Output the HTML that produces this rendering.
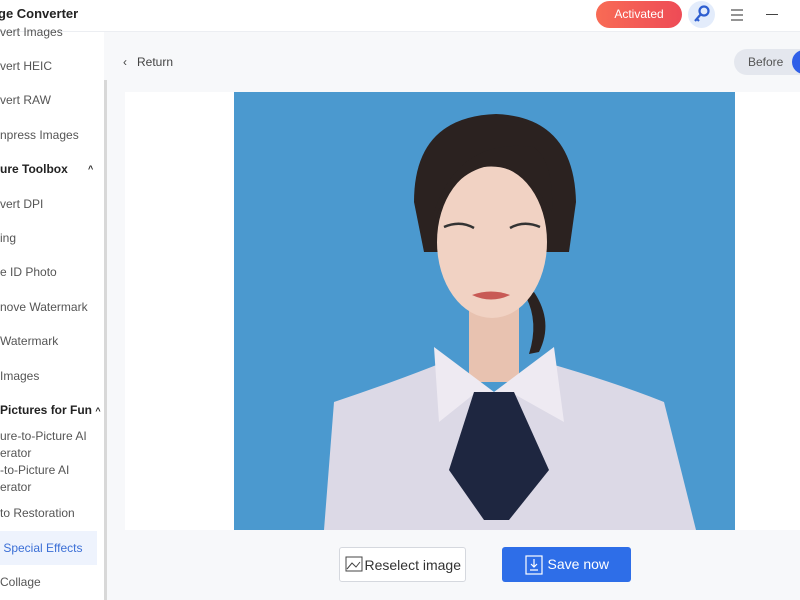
<!DOCTYPE html><html><head><style>
body{margin:0;width:800px;height:600px;overflow:hidden;font-family:"Liberation Sans",sans-serif;background:#f7f8fa;position:relative}
.hdr{position:absolute;left:0;top:0;width:800px;height:31px;background:#fff;border-bottom:1px solid #eceef2}
.ttl{position:absolute;left:-2px;top:6px;font-size:13px;font-weight:bold;color:#222}
.act{position:absolute;left:596px;top:1px;width:86px;height:27px;border-radius:14px;background:linear-gradient(90deg,#f86b55,#ee4b56);color:#fff;font-size:12px;text-align:center;line-height:27px}
.key{position:absolute;left:688px;top:1px;width:27px;height:27px;border-radius:50%;background:#e3ecfb}
.side{position:absolute;left:0;top:32px;width:104px;height:568px;background:#fff}
.sb{position:absolute;left:104px;top:80px;width:3px;height:520px;background:#d8d8d8}
.it{position:absolute;left:0;font-size:12px;color:#555;white-space:nowrap;line-height:17px}
.b{font-weight:bold;color:#222}
.card{position:absolute;left:125px;top:92px;width:675px;height:438px;background:#fff}
.btn{position:absolute;top:547px;height:35px;border-radius:3px;font-size:14px;line-height:35px}
</style></head><body>
<div class="hdr"><div class="ttl">ge Converter</div>
<div class="act">Activated</div>
<div class="key"><svg width="27" height="27"><circle cx="16" cy="10" r="4.5" fill="none" stroke="#2f5fd0" stroke-width="2.2"/><path d="M13 13 L7 20 M9 18 L11 20" stroke="#2f5fd0" stroke-width="2.2" fill="none"/></svg></div>
<svg style="position:absolute;left:729px;top:8px" width="16" height="14"><path d="M2 2H14M2 7H14M2 12H14" stroke="#555" stroke-width="1.3"/></svg>
<div style="position:absolute;left:766px;top:14px;width:12px;height:1.3px;background:#444"></div>
</div>
<div class="side">
<div class="it" style="top:-8px">vert Images</div>
<div class="it" style="top:26px">vert HEIC</div>
<div class="it" style="top:60px">vert RAW</div>
<div class="it" style="top:95px">npress Images</div>
<div class="it b" style="top:129px">ure Toolbox <span style="position:absolute;left:88px;font-size:9px">^</span></div>
<div class="it" style="top:164px">vert DPI</div>
<div class="it" style="top:198px">ing</div>
<div class="it" style="top:232px">e ID Photo</div>
<div class="it" style="top:267px">nove Watermark</div>
<div class="it" style="top:301px"> Watermark</div>
<div class="it" style="top:336px"> Images</div>
<div class="it b" style="top:370px"> Pictures for Fun <span style="font-size:9px">^</span></div>
<div class="it" style="top:396px">ure-to-Picture AI<br>erator</div>
<div class="it" style="top:430px">-to-Picture AI<br>erator</div>
<div class="it" style="top:473px">to Restoration</div>
<div style="position:absolute;left:0;top:499px;width:97px;height:34px;background:#eef3fd"></div>
<div class="it" style="top:508px;color:#3b6fd6">&nbsp;Special Effects</div>
<div class="it" style="top:542px">Collage</div>
</div>
<div class="sb"></div>
<div style="position:absolute;left:123px;top:55px;font-size:12px;color:#444">‹&nbsp;&nbsp;&nbsp;Return</div>
<div style="position:absolute;left:734px;top:49px;width:80px;height:26px;border-radius:13px;background:#e4e7ee;font-size:12px;color:#555;line-height:26px;padding-left:14px;box-sizing:border-box">Before</div>
<div style="position:absolute;left:792px;top:50px;width:24px;height:24px;border-radius:50%;background:#2f5fe8"></div>
<div class="card"></div>
<svg style="position:absolute;left:234px;top:92px" width="501" height="438">
<rect width="501" height="438" fill="#4b99cf"/>
<path d="M300 200 Q320 230 305 260 L295 262 Q305 230 292 205Z" fill="#2b2220"/>
<path d="M180 110 Q180 25 262 22 Q340 25 342 110 L335 160 L190 160Z" fill="#2b2220"/>
<rect x="235" y="200" width="50" height="90" fill="#e8c2b0"/>
<path d="M90 438 L100 310 Q160 290 210 270 L260 300 L310 270 Q380 290 430 310 L462 438Z" fill="#dcd9e6"/>
<ellipse cx="258" cy="150" rx="55" ry="76" fill="#f1d2c3"/>
<path d="M200 120 Q225 45 300 55 Q320 70 318 120 Q290 70 250 75 Q215 85 200 130Z" fill="#2b2220"/>
<path d="M200 255 L260 300 L320 255 L330 330 L280 302 L240 302 L205 330Z" fill="#eeeaf2"/>
<path d="M240 300 L280 300 L315 378 L275 428 L250 428 L215 378Z" fill="#1e2640"/>
<path d="M210 135 Q226 128 240 136 M276 136 Q290 128 306 135" stroke="#333" stroke-width="2.5" fill="none"/>
<path d="M238 203 Q257 196 276 203 Q257 212 238 203Z" fill="#c85a55"/>
</svg>
<div class="btn" style="left:339px;width:127px;border:1px solid #d5d8de;background:#fff;color:#333;box-sizing:border-box;text-align:right;padding-right:4px">Reselect image</div>
<svg style="position:absolute;left:345px;top:556px" width="20" height="18"><rect x="1" y="1" width="16" height="14" fill="none" stroke="#444"/><path d="M2 13 L7 7 L11 11 L15 6" stroke="#444" fill="none"/></svg>
<div class="btn" style="left:502px;width:129px;background:#2e6ee8;color:#fff;text-align:right;padding-right:22px;box-sizing:border-box">Save now</div>
<svg style="position:absolute;left:525px;top:555px" width="18" height="20"><rect x="1" y="1" width="16" height="18" fill="none" stroke="#fff" stroke-width="1.2"/><path d="M9 4V12M6 9L9 12L12 9M5 15H13" stroke="#fff" fill="none" stroke-width="1.2"/></svg>
</body></html>
